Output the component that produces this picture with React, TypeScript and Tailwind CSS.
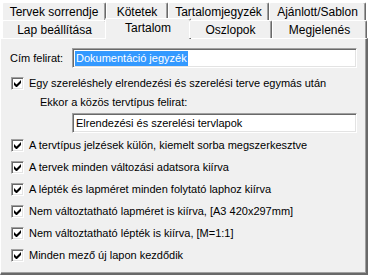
const topTabs = [
  { label: "Tervek sorrendje", w: "w-[104px]" },
  { label: "Kötetek", w: "w-[62px]" },
  { label: "Tartalomjegyzék", w: "w-[101px]" },
  { label: "Ajánlott/Sablon", w: "w-[97px]" },
];

const options = [
  "A tervtípus jelzések külön, kiemelt sorba megszerkesztve",
  "A tervek minden változási adatsora kiírva",
  "A lépték és lapméret minden folytató laphoz kiírva",
  "Nem változtatható lapméret is kiírva, [A3 420x297mm]",
  "Nem változtatható lépték is kiírva, [M=1:1]",
  "Minden mező új lapon kezdődik",
];

function Tab({ label, w }: { label: string; w: string }) {
  return (
    <div
      className={`${w} h-[18px] flex items-center justify-center bg-[#f0f0f0] border-l border-t border-white rounded-t-[2px] shadow-[inset_-1px_0_0_#a0a0a0] border-r border-r-[#696969]`}
    >
      <span className="leading-none pt-[1px]">{label}</span>
    </div>
  );
}

function Check({ children }: { children: React.ReactNode }) {
  return (
    <div className="h-[22px] flex items-center pl-[10px]">
      <div className="w-[13px] h-[13px] bg-white border border-t-[#a0a0a0] border-l-[#a0a0a0] border-b-white border-r-white shadow-[inset_1px_1px_0_#696969,inset_-1px_-1px_0_#e3e3e3] flex items-center justify-center">
        <svg width="7" height="7" viewBox="0 0 7 7">
          <path d="M0 2v3l2 2h1l4-4V0L2.5 4.5Z" fill="#000" />
        </svg>
      </div>
      <span className="ml-[5px]">{children}</span>
    </div>
  );
}

function Field({ value, selected }: { value: string; selected?: boolean }) {
  return (
    <div className="w-[285px] h-[20px] bg-white border border-t-[#a0a0a0] border-l-[#a0a0a0] border-b-white border-r-white shadow-[inset_1px_1px_0_#696969,inset_-1px_-1px_0_#e3e3e3] flex items-center pl-[2px]">
      <span className={selected ? "bg-[#3399ff] text-white px-[1px] leading-[15px]" : "px-[1px]"}>{value}</span>
    </div>
  );
}

export default function App() {
  return (
    <div
      className="w-[369px] h-[275px] bg-white text-black text-[11px] overflow-hidden"
      style={{ fontFamily: '"Liberation Sans", Arial, sans-serif' }}
    >
      <div className="flex pl-[2px] pt-[2px] text-[12px]">
        {topTabs.map((t) => (
          <Tab key={t.label} {...t} />
        ))}
      </div>
      <div className="flex pl-[2px] items-end h-[18px] relative z-10 text-[12px]">
        <Tab label="Lap beállítása" w="w-[105px]" />
        <div className="w-[86px] h-[21px] -mx-[2px] -mb-[1px] flex items-start justify-center pt-[3px] bg-[#f0f0f0] border-l border-t border-white rounded-t-[2px] border-r border-r-[#696969] shadow-[inset_-1px_0_0_#a0a0a0]">
          <span className="leading-none">Tartalom</span>
        </div>
        <Tab label="Oszlopok" w="w-[83px]" />
        <Tab label="Megjelenés" w="w-[95px]" />
      </div>
      <div className="w-[368px] h-[237px] bg-[#f0f0f0] border-l border-t border-white border-r-2 border-b-2 border-r-[#696969] border-b-[#696969] shadow-[inset_-1px_-1px_0_#a0a0a0]">
        <div className="flex items-center mt-[9px] h-[20px]">
          <span className="pl-[9px] w-[71px]">Cím felirat:</span>
          <Field value="Dokumentáció jegyzék" selected />
        </div>
        <div className="mt-[4px]">
          <Check>Egy szereléshely elrendezési és szerelési terve egymás után</Check>
        </div>
        <div className="pl-[39px] h-[16px] leading-[16px]">Ekkor a közös tervtípus felirat:</div>
        <div className="pl-[71px] mt-[3px]">
          <Field value="Elrendezési és szerelési tervlapok" />
        </div>
        <div className="mt-[1px]">
          {options.map((o) => (
            <Check key={o}>{o}</Check>
          ))}
        </div>
      </div>
    </div>
  );
}
